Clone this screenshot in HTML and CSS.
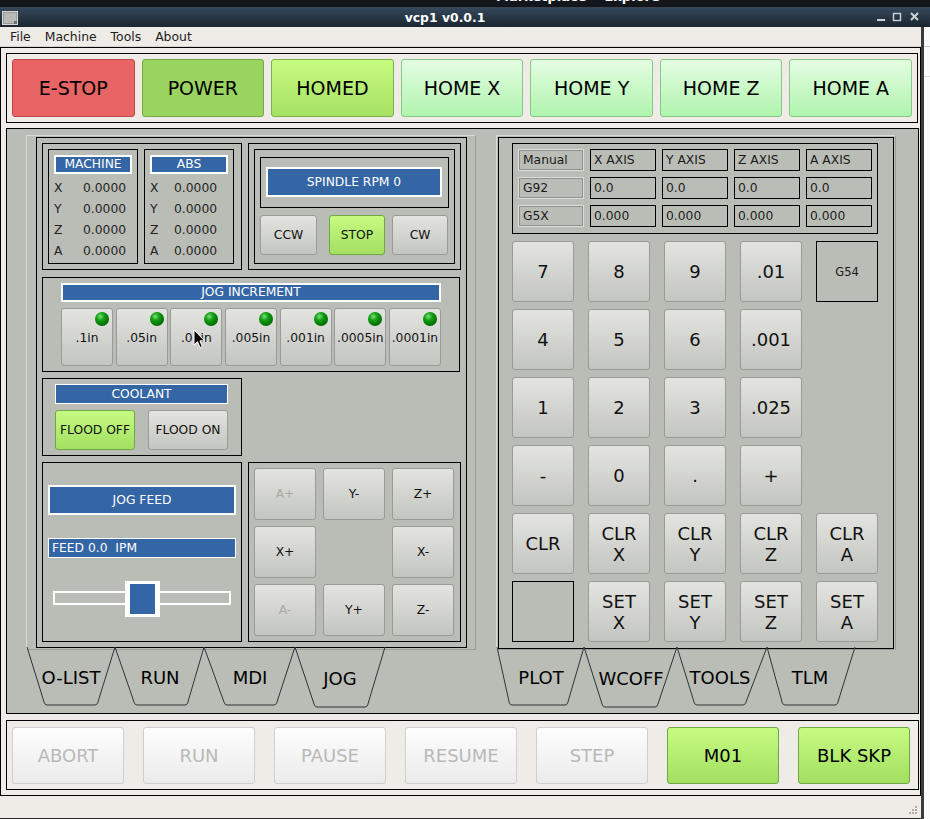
FILE: index.html
```html
<!DOCTYPE html>
<html>
<head>
<meta charset="utf-8">
<title>vcp1 v0.0.1</title>
<link rel="stylesheet" href="styles.css">
</head>
<body>
<div class="topband"><span>Marketplace&nbsp;&nbsp;&nbsp;&nbsp;Explore</span></div>
<div class="titlebar">
  <div class="ticon">
    <svg width="16" height="14" viewBox="0 0 16 14"><rect x="0.5" y="0.5" width="15" height="13" fill="#9a9c98" stroke="#d8d8d8"/><rect x="2" y="2" width="12" height="10" fill="#b8bab6"/><rect x="12" y="10" width="3" height="3" fill="#6d6f6b"/></svg>
  </div>
  <div class="ttitle">vcp1 v0.0.1</div>
  <div class="tctrl">
    <svg width="59" height="19" viewBox="0 0 59 19"><rect x="6" y="11" width="8" height="2" fill="#cfd3d6"/><rect x="22.5" y="5.5" width="7" height="7" fill="none" stroke="#cfd3d6" stroke-width="1.4"/><path d="M40 5 L47 12 M47 5 L40 12" stroke="#cfd3d6" stroke-width="2"/></svg>
  </div>
</div>
<div class="desk">
  <div class="win">
    <div class="menubar"><span>File</span><span>Machine</span><span>Tools</span><span>About</span></div>
    <div class="outer">
      <div class="topframe">
        <div class="tb estop">E-STOP</div>
        <div class="tb power">POWER</div>
        <div class="tb homed">HOMED</div>
        <div class="tb home">HOME X</div>
        <div class="tb home">HOME Y</div>
        <div class="tb home">HOME Z</div>
        <div class="tb home">HOME A</div>
      </div>
      <div class="gray">
        <div class="tabw tabw-left">
          <div class="pane">
            <div class="colframe">
              <div class="row1">
                <div class="frame dro">
                  <div class="frame drobox">
                    <div class="blue drolbl">MACHINE</div>
                    <div class="drorow"><span>X</span><span>0.0000</span></div>
                    <div class="drorow"><span>Y</span><span>0.0000</span></div>
                    <div class="drorow"><span>Z</span><span>0.0000</span></div>
                    <div class="drorow"><span>A</span><span>0.0000</span></div>
                  </div>
                  <div class="frame drobox abs">
                    <div class="blue drolbl">ABS</div>
                    <div class="drorow"><span>X</span><span>0.0000</span></div>
                    <div class="drorow"><span>Y</span><span>0.0000</span></div>
                    <div class="drorow"><span>Z</span><span>0.0000</span></div>
                    <div class="drorow"><span>A</span><span>0.0000</span></div>
                  </div>
                </div>
                <div class="frame spindle">
                  <div class="frame spin-in">
                    <div class="frame rpmf"><div class="blue rpm">SPINDLE RPM 0</div></div>
                    <div class="spbtns">
                      <div class="btn ccw">CCW</div>
                      <div class="btn on stop">STOP</div>
                      <div class="btn cw">CW</div>
                    </div>
                  </div>
                </div>
              </div>
              <div class="frame joginc">
                <div class="blue inclbl">JOG INCREMENT</div>
                <div class="incs">
                  <div class="btn inc"><i class="led"></i>.1in</div>
                  <div class="btn inc"><i class="led"></i>.05in</div>
                  <div class="btn inc"><i class="led"></i>.01in</div>
                  <div class="btn inc"><i class="led"></i>.005in</div>
                  <div class="btn inc"><i class="led"></i>.001in</div>
                  <div class="btn inc"><i class="led"></i>.0005in</div>
                  <div class="btn inc"><i class="led"></i>.0001in</div>
                </div>
              </div>
              <div class="frame coolant">
                <div class="blue coollbl">COOLANT</div>
                <div class="coolbtns">
                  <div class="btn on cool">FLOOD OFF</div>
                  <div class="btn cool">FLOOD ON</div>
                </div>
              </div>
              <div class="row4">
                <div class="frame jogfeed">
                  <div class="blue feedlbl">JOG FEED</div>
                  <div class="blue feedval">FEED 0.0&nbsp;&nbsp;IPM</div>
                  <div class="slider"><div class="trough"><div class="handle"></div></div></div>
                </div>
                <div class="frame jogbtns">
                  <div class="btn jb dis">A+</div>
                  <div class="btn jb">Y-</div>
                  <div class="btn jb">Z+</div>
                  <div class="btn jb">X+</div>
                  <div class="jbgap"></div>
                  <div class="btn jb">X-</div>
                  <div class="btn jb dis">A-</div>
                  <div class="btn jb">Y+</div>
                  <div class="btn jb">Z-</div>
                </div>
              </div>
            </div>
          </div>
          <svg class="tabs" width="450" height="66" viewBox="0 0 450 66">
            <g fill="none" stroke="#2e3436" stroke-width="1">
              <path d="M1 0 L18.3 55.8 Q19 58 21 58 L69 58 Q71 58 71.7 55.8 L89 0"/>
              <path d="M89 0 L108.3 55.8 Q109 58 111 58 L159 58 Q161 58 161.7 55.8 L178 0"/>
              <path d="M178 0 L198.3 55.8 Q199 58 201 58 L248 58 Q250 58 250.7 55.8 L269 0"/>
              <path d="M269 0 L288.3 57.8 Q289 60 291 60 L339 60 Q341 60 341.7 57.8 L359 0"/>
            </g>
            <g class="tabtext" text-anchor="middle">
              <text x="45" y="37">O-LIST</text>
              <text x="134" y="37">RUN</text>
              <text x="224" y="37">MDI</text>
              <text x="314" y="38">JOG</text>
            </g>
          </svg>
        </div>
        <div class="tabw tabw-right">
          <div class="pane rpane">
            <div class="rframe">
              <div class="frame offs">
                <div class="cell hcell">Manual</div>
                <div class="cell">X AXIS</div>
                <div class="cell">Y AXIS</div>
                <div class="cell">Z AXIS</div>
                <div class="cell">A AXIS</div>
                <div class="cell hcell">G92</div>
                <div class="cell">0.0</div>
                <div class="cell">0.0</div>
                <div class="cell">0.0</div>
                <div class="cell">0.0</div>
                <div class="cell hcell">G5X</div>
                <div class="cell">0.000</div>
                <div class="cell">0.000</div>
                <div class="cell">0.000</div>
                <div class="cell">0.000</div>
              </div>
              <div class="keypad">
                <div class="btn key">7</div>
                <div class="btn key">8</div>
                <div class="btn key">9</div>
                <div class="btn key">.01</div>
                <div class="keybox g54">G54</div>
                <div class="btn key">4</div>
                <div class="btn key">5</div>
                <div class="btn key">6</div>
                <div class="btn key">.001</div>
                <div class="keyempty"></div>
                <div class="btn key">1</div>
                <div class="btn key">2</div>
                <div class="btn key">3</div>
                <div class="btn key">.025</div>
                <div class="keyempty"></div>
                <div class="btn key">-</div>
                <div class="btn key">0</div>
                <div class="btn key">.</div>
                <div class="btn key">+</div>
                <div class="keyempty"></div>
                <div class="btn key">CLR</div>
                <div class="btn key">CLR<br>X</div>
                <div class="btn key">CLR<br>Y</div>
                <div class="btn key">CLR<br>Z</div>
                <div class="btn key">CLR<br>A</div>
                <div class="keybox"></div>
                <div class="btn key">SET<br>X</div>
                <div class="btn key">SET<br>Y</div>
                <div class="btn key">SET<br>Z</div>
                <div class="btn key">SET<br>A</div>
              </div>
            </div>
          </div>
          <svg class="tabs" width="400" height="66" viewBox="0 0 400 66">
            <g fill="none" stroke="#2e3436" stroke-width="1">
              <path d="M1 0 L13.3 55.8 Q14 58 16 58 L69 58 Q71 58 71.7 55.8 L88 0"/>
              <path d="M88 0 L106.3 57.8 Q107 60 109 60 L159 60 Q161 60 161.7 57.8 L181 0"/>
              <path d="M181 0 L198.3 55.8 Q199 58 201 58 L247 58 Q249 58 249.7 55.8 L271 0"/>
              <path d="M271 0 L286.3 55.8 Q287 58 289 58 L339 58 Q341 58 341.7 55.8 L359 0"/>
            </g>
            <g class="tabtext" text-anchor="middle">
              <text x="45" y="37">PLOT</text>
              <text x="135" y="38">WCOFF</text>
              <text x="224" y="37">TOOLS</text>
              <text x="314" y="37">TLM</text>
            </g>
          </svg>
        </div>
      </div>
      <div class="botframe">
        <div class="bb dis">ABORT</div>
        <div class="bb dis">RUN</div>
        <div class="bb dis">PAUSE</div>
        <div class="bb dis">RESUME</div>
        <div class="bb dis">STEP</div>
        <div class="bb on">M01</div>
        <div class="bb on">BLK SKP</div>
      </div>
    </div>
    <div class="statusarea">
      <svg width="12" height="12" viewBox="0 0 12 12"><g fill="#b3afa8"><rect x="9" y="1" width="2" height="2"/><rect x="6" y="4" width="2" height="2"/><rect x="9" y="4" width="2" height="2"/><rect x="3" y="7" width="2" height="2"/><rect x="6" y="7" width="2" height="2"/><rect x="9" y="7" width="2" height="2"/></g></svg>
    </div>
  </div>
  <div class="strip"><div class="stripline"></div><div class="stripline2"></div></div>
</div>
<svg class="cursor" width="13" height="21" viewBox="0 0 13 21"><path d="M1 1 L1 16 L4.5 12.6 L7 18.5 L9.3 17.5 L6.9 11.8 L11.5 11.8 Z" fill="#000" stroke="#fff" stroke-width="1" stroke-linejoin="round"/></svg>
</body>
</html>
```

FILE: styles.css
```css
* { box-sizing: border-box; margin: 0; padding: 0; }
html, body { width: 930px; height: 819px; overflow: hidden; }
body {
  position: relative;
  background: #15191d;
  font-family: "DejaVu Sans", "Liberation Sans", sans-serif;
  color: #000;
}

/* ---------- top band & title bar ---------- */
.topband {
  height: 8px;
  overflow: hidden;
  background: #13171b;
  border-bottom: 1px solid #3a4550;
}
.topband span {
  display: block;
  margin: -10px 0 0 496px;
  font: bold 13px/13px "DejaVu Sans", sans-serif;
  color: #fff;
  white-space: nowrap;
}
.titlebar {
  height: 19px;
  display: flex;
  align-items: center;
  background: linear-gradient(#34485b, #1b2530);
}
.ticon { width: 19px; padding-left: 2px; display: flex; align-items: center; }
.ticon svg { display: block; }
.ttitle {
  flex: 1;
  text-align: center;
  color: #fff;
  font: bold 12.4px/19px "DejaVu Sans", sans-serif;
}
.tctrl { width: 59px; height: 19px; }
.tctrl svg { display: block; }

/* ---------- desk ---------- */
.desk { display: flex; height: 792px; }
.win {
  width: 921px;
  height: 792px;
  background: #efebe7;
  display: flex;
  flex-direction: column;
  border-bottom: 1px solid #2b2b2b;
}
.strip {
  width: 9px;
  background: #fbfbfb;
  border-left: 3px solid #3b3b3b;
}
.stripline { height: 20px; border-bottom: 1px solid #c9c9c9; }
.stripline2 { height: 30px; border-bottom: 1px solid #d9d9d9; }

.menubar {
  height: 20px;
  border-bottom: 1px solid #d6d2cc;
  display: flex;
  padding-left: 3px;
  font-size: 12.4px;
  line-height: 19px;
  color: #1d1d1d;
}
.menubar span { padding: 0 7px; }

.outer {
  border: 1px solid #000;
  height: 749px;
  padding: 5px 1px 5px 5px;
  display: flex;
  flex-direction: column;
}

/* ---------- top buttons ---------- */
.topframe {
  width: 912px;
  height: 70px;
  border: 1px solid #000;
  padding: 5px;
  display: flex;
  gap: 7px;
  margin-bottom: 5px;
}
.tb {
  flex: 1;
  border-radius: 3px;
  display: flex;
  align-items: center;
  justify-content: center;
  font-size: 19px;
}
.estop { background: #e86465; border: 1px solid #c0454b; }
.power { background: #9ad35f; border: 1px solid #74a84a; }
.homed { background: linear-gradient(#c7fb81, #a6e162); border: 1px solid #78b04a; }
.home { background: linear-gradient(#e4fde2, #b0f4ae); border: 1px solid #86c886; }

/* ---------- gray area ---------- */
.gray {
  height: 586px;
  border: 1px solid #000;
  background: #babdb6;
  display: flex;
  gap: 20px;
  padding: 6px 0 0 19px;
  margin-bottom: 6px;
}
.tabw { display: flex; flex-direction: column; }
.tabw-left { width: 450px; }
.tabw-right { width: 400px; }
.pane {
  height: 515px;
  border: 1px solid #d9dad5;
  border-right-color: #9c9e99;
  border-bottom-color: #9c9e99;
  padding: 1px 0 0 9px;
}
.rpane { padding: 1px; }
.tabs { display: block; margin-top: -3px; overflow: visible; }
.tabtext text { font-family: "DejaVu Sans", sans-serif; font-size: 18px; fill: #000; }

.frame { border: 1px solid #000; }
.blue {
  background: #3465a4;
  color: #fff;
  border: 2px solid #fff;
  text-align: center;
  font-size: 12.3px;
}

/* generic gradient button */
.btn {
  background: linear-gradient(#e3e4e0, #c3c5c0);
  border: 1px solid #999b96;
  border-radius: 3px;
  display: flex;
  align-items: center;
  justify-content: center;
  text-align: center;
  font-size: 12.3px;
  color: #111;
}
.btn.on { background: linear-gradient(#c6fb81, #a3df61); border-color: #6fa945; }
.btn.dis { color: #a8aaa5; }

/* left column */
.colframe {
  width: 431px;
  height: 511px;
  border: 1px solid #000;
  padding: 5px;
}
.row1 { display: flex; gap: 6px; height: 127px; margin-bottom: 7px; }
.dro { width: 200px; height: 127px; padding: 5px; display: flex; gap: 6px; }
.drobox { width: 90px; height: 115px; padding: 5px 5px 0 5px; }
.drolbl { width: 78px; height: 19px; line-height: 15px; margin-bottom: 4px; }
.drorow {
  display: grid;
  grid-template-columns: 29px auto;
  height: 21px;
  line-height: 21px;
  font-size: 12.3px;
  color: #222;
}
.abs .drorow { grid-template-columns: 24px auto; }

.spindle { width: 213px; height: 127px; padding: 5px; }
.spin-in { width: 201px; height: 115px; padding: 7px 0 0 5px; }
.rpmf { width: 189px; height: 51px; padding: 9px 0 0 5px; }
.rpm { width: 176px; height: 30px; line-height: 26px; }
.spbtns { display: flex; margin-top: 7px; height: 40px; }
.ccw { width: 57px; margin-right: 12px; }
.stop { width: 56px; margin-right: 7px; }
.cw { width: 56px; }

.joginc { width: 418px; height: 95px; padding: 5px 0 0 18px; margin-bottom: 6px; }
.inclbl { width: 380px; height: 19px; line-height: 15px; }
.incs { display: flex; gap: 2.5px; width: 380px; margin-top: 6px; height: 58px; }
.inc { flex: 1; position: relative; padding-top: 1px; }
.led {
  position: absolute;
  right: 3px;
  top: 3px;
  width: 14px;
  height: 14px;
  border-radius: 50%;
  background: radial-gradient(circle at 38% 32%, #7ee07e 0, #14a014 30%, #047a04 60%, #004c00 100%);
}

.coolant { width: 200px; height: 78px; padding: 5px 0 0 12px; margin-bottom: 6px; }
.coollbl { width: 173px; height: 20px; border-width: 1px; line-height: 18px; }
.coolbtns { display: flex; justify-content: space-between; width: 173px; margin-top: 6px; }
.cool { width: 80px; height: 40px; }

.row4 { display: flex; gap: 6px; height: 180px; }
.jogfeed { width: 200px; height: 180px; padding: 22px 0 0 5px; }
.feedlbl { width: 188px; height: 30px; line-height: 26px; }
.feedval {
  width: 188px;
  height: 20px;
  margin-top: 23px;
  border-width: 1px;
  text-align: left;
  padding-left: 3px;
  line-height: 18px;
}
.slider { margin-top: 22px; height: 36px; padding: 11px 0 0 5px; }
.trough {
  position: relative;
  width: 178px;
  height: 14px;
  border: 2px solid #fff;
}
.handle {
  position: absolute;
  left: 70px;
  top: -12px;
  width: 35px;
  height: 36px;
  background: #3465a4;
  border: solid #fff;
  border-width: 3px 5px;
}
.jogbtns {
  width: 213px;
  height: 180px;
  padding: 5px;
  display: grid;
  grid-template-columns: 62px 62px 62px;
  grid-template-rows: 52px 52px 52px;
  column-gap: 7px;
  row-gap: 6px;
}

/* right panel */
.rframe {
  width: 396px;
  height: 512px;
  border: 1px solid #000;
  padding: 5px 0 0 13px;
}
.offs {
  width: 366px;
  height: 91px;
  padding: 5px;
  display: grid;
  grid-template-columns: repeat(5, 66px);
  grid-template-rows: repeat(3, 22px);
  column-gap: 6px;
  row-gap: 6px;
}
.cell {
  border: 1px solid #000;
  font-size: 12.3px;
  line-height: 20px;
  padding-left: 3px;
  color: #1a1a1a;
  white-space: nowrap;
}
.hcell {
  border: 1px solid #dcddd8;
  box-shadow: inset 0 0 0 1px #8f918c;
  padding-left: 4px;
}
.keypad {
  margin-top: 7px;
  width: 366px;
  display: grid;
  grid-template-columns: repeat(5, 62px);
  grid-template-rows: repeat(6, 61px);
  column-gap: 14px;
  row-gap: 7px;
}
.key { font-size: 18px; line-height: 21px; }
.keybox {
  border: 1px solid #000;
  display: flex;
  align-items: center;
  justify-content: center;
  font-size: 11.5px;
  color: #1a1a1a;
}

/* bottom buttons */
.botframe {
  width: 913px;
  height: 70px;
  border: 1px solid #000;
  padding: 6px 0 0 5px;
  display: flex;
  gap: 19px;
}
.bb {
  width: 112px;
  height: 57px;
  border-radius: 3px;
  display: flex;
  align-items: center;
  justify-content: center;
  font-size: 18px;
}
.bb.dis { background: linear-gradient(#fdfdfd, #ebebeb); border: 1px solid #cfcfcf; color: #b9b9b9; }
.bb.on { background: linear-gradient(#c6fb81, #a3df61); border: 1px solid #6fa945; color: #000; }

.statusarea { flex: 1; display: flex; justify-content: flex-end; align-items: flex-end; padding: 0 3px 1px 0; }
.statusarea svg { display: block; }

.cursor { position: absolute; left: 193px; top: 329px; }
```
